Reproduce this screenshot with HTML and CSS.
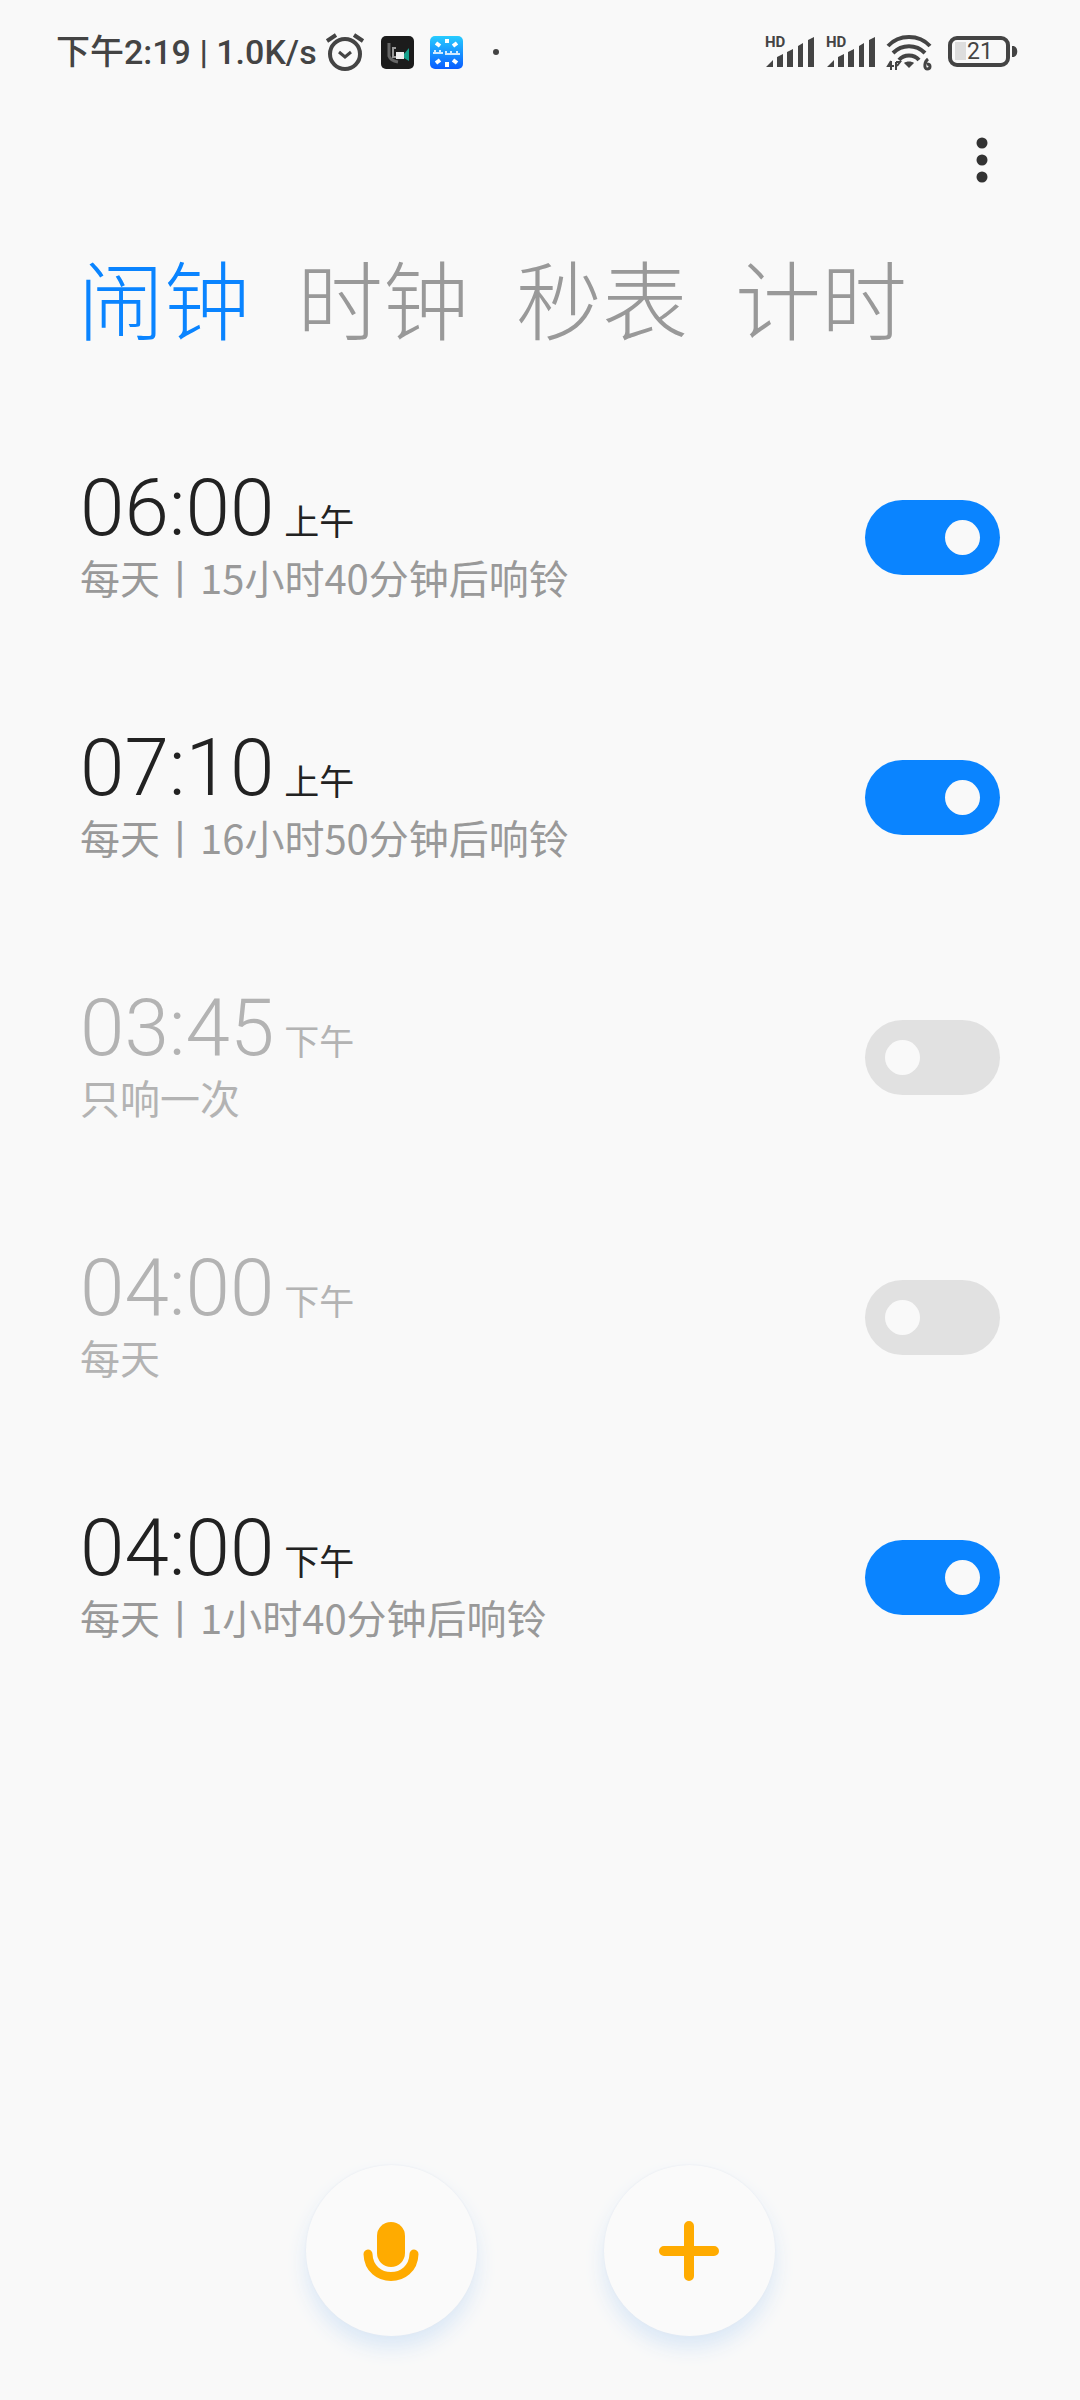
FILE: index.html
```html
<!DOCTYPE html>
<html lang="zh-CN">

<head>
    <meta charset="UTF-8">
    <meta name="viewport" content="width=device-width, initial-scale=1.0">
    <title>闹钟</title>
    <link rel="stylesheet" href="styles.css">
</head>

<body>
    <div class="status">
        <span class="status-text">下午2:19 | 1.0K/s</span>
        <svg class="icon-alarm" width="40" height="40" viewBox="0 0 40 40" fill="none" stroke="#444" stroke-width="4">
            <circle cx="20" cy="22" r="15"/>
            <path d="M2 9 L11 3 M38 9 L29 3"/>
            <path d="M14 20 L20 25 L26 20" stroke-width="3"/>
        </svg>
        <svg class="icon-app" width="33" height="33" viewBox="0 0 33 33">
            <rect width="33" height="33" rx="5" fill="#1c1c1c"/>
            <path d="M8 7 V20 C9 23 12 25 17 26" fill="none" stroke="#666" stroke-width="3"/>
            <path d="M12 11 V21 M11 12 H15 M11 21 H15" stroke="#999" stroke-width="2"/>
            <rect x="15" y="16" width="8" height="7" fill="#eee"/>
            <path d="M23 18 L28 12 V25 L23 22 Z" fill="#16a08c"/>
        </svg>
        <svg class="icon-app" width="33" height="33" viewBox="0 0 33 33">
            <defs>
                <linearGradient id="blue" x1="0" y1="0" x2="0" y2="1">
                    <stop offset="0" stop-color="#27ccff"/>
                    <stop offset="1" stop-color="#0a5cff"/>
                </linearGradient>
            </defs>
            <rect width="33" height="33" rx="5" fill="url(#blue)"/>
            <g stroke="#fff" stroke-width="4">
                <path d="M17 3 V7 M17 26 V31 M6 7 L10 10 M27 7 L23 10 M6 27 L10 24 M27 27 L23 24"/>
                <path d="M3 17 H13 M15 18 H30 M5 14 V18 M10 14 V18 M16 15 V18 M21 15 V18 M27 15 V18" stroke-width="2" opacity="0.8"/>
            </g>
        </svg>
        <span class="status-dot"></span>

        <div class="status-right">
            <svg width="51" height="38" viewBox="0 0 51 38" fill="#444">
                <text x="1" y="14" class="hd">HD</text>
                <path d="M2 34 L9 27 V34 Z M13 24 L19 21 V34 H13 Z M23 19 L29 16 V34 H23 Z M34 13 L39 10 V34 H34 Z M44 7 L50 4 V34 H44 Z"/>
            </svg>
            <svg width="51" height="38" viewBox="0 0 51 38" fill="#444">
                <text x="1" y="14" class="hd">HD</text>
                <path d="M2 34 L9 27 V34 Z M13 24 L19 21 V34 H13 Z M23 19 L29 16 V34 H23 Z M34 13 L39 10 V34 H34 Z M44 7 L50 4 V34 H44 Z"/>
            </svg>
            <svg class="icon-wifi" width="46" height="38" viewBox="0 0 46 38" fill="none" stroke="#444" stroke-width="4">
                <path d="M2 13 C13 1 33 1 44 13"/>
                <path d="M7 20 C16 11 30 11 39 20"/>
                <path d="M13 27 C18 21 28 21 33 27"/>
                <path d="M18 30 L23 35 L28 30 C26 28 20 28 18 30 Z" fill="#444" stroke="none"/>
                <path d="M5 28 L2 33 H8 M5 28 V37 M10 29 V37 M10 29 L14 29 L11 33" stroke-width="2"/>
                <path d="M42 26 C38 29 38 36 41 36 C45 36 45 31 41 31" stroke-width="3"/>
            </svg>
            <svg class="icon-battery" width="70" height="32" viewBox="0 0 70 32">
                <rect x="2" y="2" width="58" height="27" rx="7" fill="#f9f9f9" stroke="#444" stroke-width="4"/>
                <rect x="7" y="6" width="11" height="18" fill="#ddd"/>
                <path d="M64 10 C71 9 71 22 64 21 Z" fill="#444"/>
                <text x="32" y="23" class="level">21</text>
            </svg>
        </div>
    </div>

    <header class="toolbar">
        <button class="menu" type="button" aria-label="更多">
            <svg width="12" height="46" viewBox="0 0 12 46" fill="#333">
                <circle cx="6" cy="6" r="5.5"/>
                <circle cx="6" cy="23" r="5.5"/>
                <circle cx="6" cy="40" r="5.5"/>
            </svg>
        </button>
    </header>

    <nav class="tabs">
        <a class="tab active" href="#alarm">闹钟</a>
        <a class="tab" href="#clock">时钟</a>
        <a class="tab" href="#stopwatch">秒表</a>
        <a class="tab" href="#timer">计时</a>
    </nav>

    <main class="alarms">
        <div class="alarm">
            <label class="info" for="a1">
                <span class="time">06:00<span class="period">上午</span></span>
                <span class="note">每天丨15小时40分钟后响铃</span>
            </label>
            <input class="switch" type="checkbox" id="a1" checked>
        </div>
        <div class="alarm">
            <label class="info" for="a2">
                <span class="time">07:10<span class="period">上午</span></span>
                <span class="note">每天丨16小时50分钟后响铃</span>
            </label>
            <input class="switch" type="checkbox" id="a2" checked>
        </div>
        <div class="alarm off">
            <label class="info" for="a3">
                <span class="time">03:45<span class="period">下午</span></span>
                <span class="note">只响一次</span>
            </label>
            <input class="switch" type="checkbox" id="a3">
        </div>
        <div class="alarm off">
            <label class="info" for="a4">
                <span class="time">04:00<span class="period">下午</span></span>
                <span class="note">每天</span>
            </label>
            <input class="switch" type="checkbox" id="a4">
        </div>
        <div class="alarm">
            <label class="info" for="a5">
                <span class="time">04:00<span class="period">下午</span></span>
                <span class="note">每天丨1小时40分钟后响铃</span>
            </label>
            <input class="switch" type="checkbox" id="a5" checked>
        </div>
    </main>

    <footer class="actions">
        <button class="round" type="button" aria-label="语音">
            <svg width="60" height="64" viewBox="0 0 60 64">
                <rect x="16" y="3" width="28" height="45" rx="14" fill="#ffab00"/>
                <path d="M7 35 C8 65 52 65 53 35" fill="none" stroke="#ffab00" stroke-width="9" stroke-linecap="round"/>
            </svg>
        </button>
        <button class="round" type="button" aria-label="添加">
            <svg width="60" height="60" viewBox="0 0 60 60" stroke="#ffab00" stroke-width="10" stroke-linecap="round">
                <path d="M30 5 V55 M5 30 H55"/>
            </svg>
        </button>
    </footer>
</body>

</html>
```
FILE: styles.css
```css
* {
    box-sizing: border-box;
}

body {
    margin: 0;
    min-height: 100vh;
    display: flex;
    flex-direction: column;
    background-color: #f9f9f9;
    font-family: "Noto Sans CJK SC", sans-serif;
}

button {
    padding: 0;
    border: none;
    background: none;
}

svg {
    display: block;
    flex-shrink: 0;
}

.status {
    display: flex;
    align-items: center;
    height: 104px;
    padding: 0 62px 0 56px;
    color: #444;
}

.status-text {
    font-family: Roboto, "Noto Sans CJK SC", sans-serif;
    font-size: 34px;
    font-weight: 500;
    line-height: 40px;
    white-space: pre;
}

.icon-alarm {
    margin-left: 8px;
}

.icon-app {
    margin-left: 16px;
}

.status-dot {
    width: 6px;
    height: 6px;
    margin-left: 30px;
    border-radius: 50%;
    background-color: #444;
}

.status-right {
    display: flex;
    align-items: center;
    gap: 10px;
    margin-left: auto;
}

.icon-battery {
    margin-left: 6px;
}

.hd {
    font: 700 15px Roboto, sans-serif;
}

.level {
    font: 400 23px Roboto, sans-serif;
    fill: #444;
    text-anchor: middle;
}

.toolbar {
    display: flex;
    justify-content: flex-end;
    align-items: center;
    height: 112px;
    padding: 0 74px;
}

.menu {
    padding: 0 18px;
}

.tabs {
    display: flex;
    gap: 47px;
    padding: 21px 78px 0;
}

.tab {
    font-size: 86px;
    font-weight: 300;
    line-height: 120px;
    color: #999;
    text-decoration: none;
}

.tab.active {
    color: #0a84ff;
}

.alarms {
    padding: 50px 80px 0;
}

.alarm {
    display: flex;
    align-items: center;
    justify-content: space-between;
    height: 260px;
    color: #222;
}

.info {
    display: flex;
    flex-direction: column;
}

.time {
    font-family: Roboto, "Noto Sans CJK SC", sans-serif;
    font-size: 80px;
    font-weight: 300;
    line-height: 80px;
}

.period {
    margin-left: 10px;
    font-size: 35px;
    font-weight: 400;
    line-height: 35px;
}

.note {
    font-size: 40px;
    line-height: 58px;
    color: #999;
}

.off,
.off .note {
    color: #b3b3b3;
}

.switch {
    appearance: none;
    display: flex;
    align-items: center;
    width: 135px;
    height: 75px;
    margin: 0;
    padding: 0 20px;
    border-radius: 38px;
    background-color: #e1e1e1;
}

.switch::before {
    content: "";
    width: 35px;
    height: 35px;
    border-radius: 50%;
    background-color: #f9f9f9;
}

.switch:checked {
    justify-content: flex-end;
    background-color: #0a84ff;
}

.actions {
    display: flex;
    justify-content: center;
    gap: 127px;
    margin-top: auto;
    padding-bottom: 64px;
}

.round {
    display: flex;
    align-items: center;
    justify-content: center;
    width: 171px;
    height: 171px;
    border-radius: 50%;
    background-color: #fafafa;
    box-shadow: 0 0 2px #e3e8f0, 0 12px 20px #dbe8f6;
}
```
